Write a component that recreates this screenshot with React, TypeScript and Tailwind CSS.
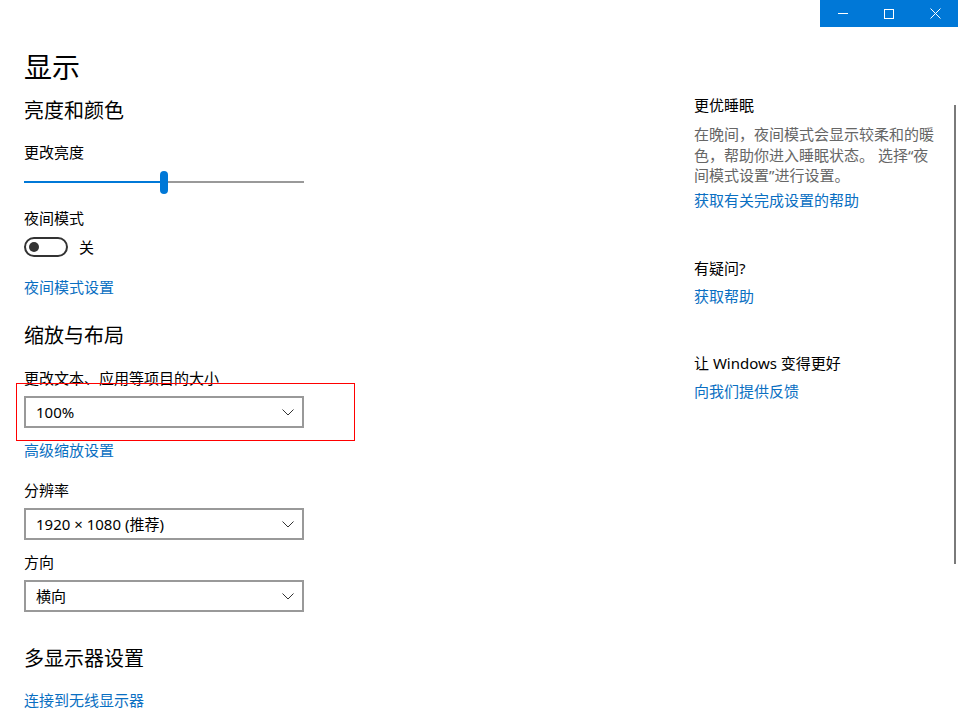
import React from "react";

const FONT = { fontFamily: '"Noto Sans", "Noto Sans CJK SC", sans-serif' };

function Chevron() {
  return (
    <svg width="12" height="7" viewBox="0 0 12 7" className="block">
      <path d="M0.5 0.5 L6 6 L11.5 0.5" fill="none" stroke="#333" strokeWidth="1" />
    </svg>
  );
}

function Dropdown({ value }: { value: string }) {
  return (
    <div className="w-[280px] h-[32px] border-2 border-[#999999] flex items-center justify-between pl-[10px] pr-[8px] text-[15px] leading-[20px] text-black">
      <span>{value}</span>
      <Chevron />
    </div>
  );
}

function Label({ children, mt }: { children: React.ReactNode; mt: string }) {
  return <div className={`${mt} text-[15px] leading-[20px] text-black`}>{children}</div>;
}

export default function App() {
  return (
    <div className="relative w-[958px] h-[725px] bg-white overflow-hidden" style={FONT}>
      {/* title bar */}
      <div className="flex justify-end h-[27px]">
        <div className="flex bg-[#0078d7]">
          <div className="w-[46px] h-[27px] flex items-center justify-center">
            <div className="w-[10px] h-[1px] bg-white" />
          </div>
          <div className="w-[46px] h-[27px] flex items-center justify-center">
            <div className="w-[10px] h-[10px] border border-white" />
          </div>
          <div className="w-[46px] h-[27px] flex items-center justify-center">
            <svg width="11" height="11" viewBox="0 0 11 11">
              <path d="M0.5 0.5 L10.5 10.5 M10.5 0.5 L0.5 10.5" stroke="white" strokeWidth="1" />
            </svg>
          </div>
        </div>
      </div>

      <div className="flex">
        {/* left column */}
        <div className="w-[694px] pl-[24px] flex flex-col items-start">
          <div className="mt-[22px] text-[28px] leading-[36px] text-black">显示</div>
          <div className="mt-[12px] text-[20px] leading-[28px] text-black">亮度和颜色</div>
          <Label mt="mt-[17px]">更改亮度</Label>
          <div className="mt-[8px] w-[280px] h-[24px] flex items-center">
            <div className="w-[136px] h-[2px] bg-[#0078d7]" />
            <div className="w-[8px] h-[23px] rounded-full bg-[#0078d7]" />
            <div className="flex-1 h-[2px] bg-[#999999]" />
          </div>
          <Label mt="mt-[14px]">夜间模式</Label>
          <div className="mt-[9px] flex items-center h-[20px]">
            <div className="w-[44px] h-[20px] rounded-full border-2 border-[#333333] flex items-center pl-[3px]">
              <div className="w-[10px] h-[10px] rounded-full bg-[#333333]" />
            </div>
            <span className="ml-[11px] text-[15px] leading-[20px] text-black">关</span>
          </div>
          <div className="mt-[20px] text-[15px] leading-[20px] text-[#0a6fc2]">夜间模式设置</div>
          <div className="mt-[25px] text-[20px] leading-[28px] text-black">缩放与布局</div>
          <Label mt="mt-[18px]">更改文本、应用等项目的大小</Label>
          <div className="mt-[8px]">
            <Dropdown value="100%" />
          </div>
          <div className="mt-[12px] text-[15px] leading-[20px] text-[#0a6fc2]">高级缩放设置</div>
          <Label mt="mt-[20px]">分辨率</Label>
          <div className="mt-[8px]">
            <Dropdown value="1920 × 1080 (推荐)" />
          </div>
          <Label mt="mt-[12px]">方向</Label>
          <div className="mt-[8px]">
            <Dropdown value="横向" />
          </div>
          <div className="mt-[33px] text-[20px] leading-[28px] text-black">多显示器设置</div>
          <div className="mt-[17px] text-[15px] leading-[20px] text-[#0a6fc2]">连接到无线显示器</div>
        </div>

        {/* right column */}
        <div className="w-[250px] flex flex-col items-start">
          <Label mt="mt-[68px]">更优睡眠</Label>
          <div className="mt-[9px] text-[15px] leading-[20.5px] text-[#666666]">
            在晚间，夜间模式会显示较柔和的暖
            <br />
            色，帮助你进入睡眠状态。 选择“夜
            <br />
            间模式设置”进行设置。
          </div>
          <div className="mt-[4px] text-[15px] leading-[20px] text-[#0a6fc2]">获取有关完成设置的帮助</div>
          <Label mt="mt-[48px]">有疑问?</Label>
          <div className="mt-[8px] text-[15px] leading-[20px] text-[#0a6fc2]">获取帮助</div>
          <Label mt="mt-[47px]">让 Windows 变得更好</Label>
          <div className="mt-[8px] text-[15px] leading-[20px] text-[#0a6fc2]">向我们提供反馈</div>
        </div>
      </div>

      {/* annotation box */}
      <div className="absolute left-[16px] top-[383px] w-[339px] h-[58px] border border-[#ff0000] pointer-events-none" />

      {/* scrollbar */}
      <div className="absolute left-[954px] top-[105px] w-[2px] h-[459px] bg-[#7a7a7a]" />
    </div>
  );
}
